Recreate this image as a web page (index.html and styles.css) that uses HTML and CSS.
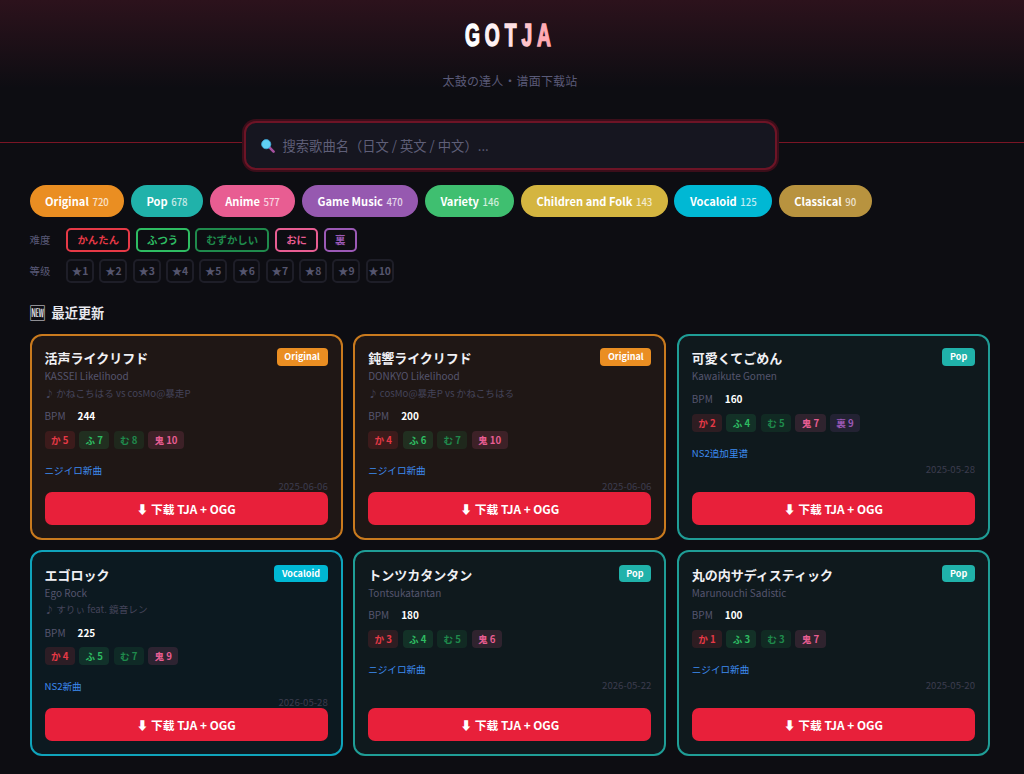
FILE: index.html
```html
<!DOCTYPE html>
<html lang="zh">
<head>
  <meta charset="UTF-8">
  <title>GOTJA</title>
  <link rel="stylesheet" href="styles.css">
</head>
<body>

  <!-- Header -->
  <header class="header">
    <h1 class="logo"><span class="l1">G</span><span class="l2">O</span><span class="l3">T</span><span class="l4">J</span><span class="l5">A</span></h1>
    <p class="tagline">太鼓の達人 · 谱面下载站</p>
  </header>

  <!-- Search -->
  <div class="search-wrap">
    <div class="search">
      <svg class="search-icon" width="14" height="14" viewBox="0 0 14 14">
        <line x1="8.2" y1="8.2" x2="12.6" y2="12.6" stroke="#a5509f" stroke-width="2.6" stroke-linecap="round"/>
        <circle cx="5.2" cy="5.2" r="4.6" fill="#5fd2f6" stroke="#3fa6d8" stroke-width="0.8"/>
      </svg>
      <span class="search-text">搜索歌曲名（日文 / 英文 / 中文）...</span>
    </div>
  </div>

  <main class="content">

    <!-- Category pills -->
    <div class="pills">
      <div class="pill bg-original">Original <span class="count">720</span></div>
      <div class="pill bg-pop">Pop <span class="count">678</span></div>
      <div class="pill bg-anime">Anime <span class="count">577</span></div>
      <div class="pill bg-game">Game Music <span class="count">470</span></div>
      <div class="pill bg-variety">Variety <span class="count">146</span></div>
      <div class="pill bg-children">Children and Folk <span class="count">143</span></div>
      <div class="pill bg-vocaloid">Vocaloid <span class="count">125</span></div>
      <div class="pill bg-classical">Classical <span class="count">90</span></div>
    </div>

    <!-- Filters -->
    <div class="filter-row">
      <span class="filter-label">难度</span>
      <div class="chip diff-kan">かんたん</div>
      <div class="chip diff-fu">ふつう</div>
      <div class="chip diff-mu">むずかしい</div>
      <div class="chip diff-oni">おに</div>
      <div class="chip diff-ura">裏</div>
    </div>
    <div class="filter-row">
      <span class="filter-label">等级</span>
      <div class="chip level">★1</div>
      <div class="chip level">★2</div>
      <div class="chip level">★3</div>
      <div class="chip level">★4</div>
      <div class="chip level">★5</div>
      <div class="chip level">★6</div>
      <div class="chip level">★7</div>
      <div class="chip level">★8</div>
      <div class="chip level">★9</div>
      <div class="chip level">★10</div>
    </div>

    <h2 class="section-title"><span class="section-icon">🆕</span> 最近更新</h2>

    <!-- Song cards -->
    <div class="grid">

      <div class="card card-original">
        <div class="card-head">
          <div class="song-title">活声ライクリフド</div>
          <span class="badge bg-original">Original</span>
        </div>
        <div class="song-sub">KASSEI Likelihood</div>
        <div class="song-artist">♪ かねこちはる vs cosMo@暴走P</div>
        <div class="bpm"><span class="bpm-label">BPM</span><b>244</b></div>
        <div class="levels">
          <span class="lv lv-kan">か 5</span>
          <span class="lv lv-fu">ふ 7</span>
          <span class="lv lv-mu">む 8</span>
          <span class="lv lv-oni">鬼 10</span>
        </div>
        <div class="note">ニジイロ新曲</div>
        <div class="date">2025-06-06</div>
        <button class="download">⬇ 下载 TJA + OGG</button>
      </div>

      <div class="card card-original">
        <div class="card-head">
          <div class="song-title">鈍響ライクリフド</div>
          <span class="badge bg-original">Original</span>
        </div>
        <div class="song-sub">DONKYO Likelihood</div>
        <div class="song-artist">♪ cosMo@暴走P vs かねこちはる</div>
        <div class="bpm"><span class="bpm-label">BPM</span><b>200</b></div>
        <div class="levels">
          <span class="lv lv-kan">か 4</span>
          <span class="lv lv-fu">ふ 6</span>
          <span class="lv lv-mu">む 7</span>
          <span class="lv lv-oni">鬼 10</span>
        </div>
        <div class="note">ニジイロ新曲</div>
        <div class="date">2025-06-06</div>
        <button class="download">⬇ 下载 TJA + OGG</button>
      </div>

      <div class="card card-pop">
        <div class="card-head">
          <div class="song-title">可愛くてごめん</div>
          <span class="badge bg-pop">Pop</span>
        </div>
        <div class="song-sub">Kawaikute Gomen</div>
        <div class="bpm"><span class="bpm-label">BPM</span><b>160</b></div>
        <div class="levels">
          <span class="lv lv-kan">か 2</span>
          <span class="lv lv-fu">ふ 4</span>
          <span class="lv lv-mu">む 5</span>
          <span class="lv lv-oni">鬼 7</span>
          <span class="lv lv-ura">裏 9</span>
        </div>
        <div class="note">NS2追加里谱</div>
        <div class="date">2025-05-28</div>
        <button class="download">⬇ 下载 TJA + OGG</button>
      </div>

      <div class="card card-vocaloid">
        <div class="card-head">
          <div class="song-title">エゴロック</div>
          <span class="badge bg-vocaloid">Vocaloid</span>
        </div>
        <div class="song-sub">Ego Rock</div>
        <div class="song-artist">♪ すりぃ feat. 鏡音レン</div>
        <div class="bpm"><span class="bpm-label">BPM</span><b>225</b></div>
        <div class="levels">
          <span class="lv lv-kan">か 4</span>
          <span class="lv lv-fu">ふ 5</span>
          <span class="lv lv-mu">む 7</span>
          <span class="lv lv-oni">鬼 9</span>
        </div>
        <div class="note">NS2新曲</div>
        <div class="date">2026-05-28</div>
        <button class="download">⬇ 下载 TJA + OGG</button>
      </div>

      <div class="card card-pop">
        <div class="card-head">
          <div class="song-title">トンツカタンタン</div>
          <span class="badge bg-pop">Pop</span>
        </div>
        <div class="song-sub">Tontsukatantan</div>
        <div class="bpm"><span class="bpm-label">BPM</span><b>180</b></div>
        <div class="levels">
          <span class="lv lv-kan">か 3</span>
          <span class="lv lv-fu">ふ 4</span>
          <span class="lv lv-mu">む 5</span>
          <span class="lv lv-oni">鬼 6</span>
        </div>
        <div class="note">ニジイロ新曲</div>
        <div class="date">2026-05-22</div>
        <button class="download">⬇ 下载 TJA + OGG</button>
      </div>

      <div class="card card-pop">
        <div class="card-head">
          <div class="song-title">丸の内サディスティック</div>
          <span class="badge bg-pop">Pop</span>
        </div>
        <div class="song-sub">Marunouchi Sadistic</div>
        <div class="bpm"><span class="bpm-label">BPM</span><b>100</b></div>
        <div class="levels">
          <span class="lv lv-kan">か 1</span>
          <span class="lv lv-fu">ふ 3</span>
          <span class="lv lv-mu">む 3</span>
          <span class="lv lv-oni">鬼 7</span>
        </div>
        <div class="note">ニジイロ新曲</div>
        <div class="date">2025-05-20</div>
        <button class="download">⬇ 下载 TJA + OGG</button>
      </div>

    </div>
  </main>
</body>
</html>
```

FILE: styles.css
```css
body {
  background-color: #0d0d12;
  color: #fff;
  font-family: "Noto Sans CJK JP", "Noto Sans", sans-serif;
  margin: 0;
}

/* header */
.header {
  box-sizing: border-box;
  height: 143px;
  padding-right: 4px;
  border-bottom: 1px solid #7a1525;
  background: linear-gradient(180deg, #2c121c 0%, #0d0d12 62%);
  text-align: center;
  overflow: hidden;
}

.logo {
  margin: 16px 0 0;
  font-family: "Liberation Sans", sans-serif;
  font-size: 31px;
  line-height: 40px;
  font-weight: 700;
  letter-spacing: 8px;
  display: inline-block;
  transform: scaleX(0.62);
  -webkit-text-stroke: 1.5px currentColor;
}

.l1 { color: #fff; }
.l2 { color: #fff2f4; }
.l3 { color: #ffe0e4; }
.l4 { color: #ffc4cb; }
.l5 { color: #ffabb4; }

.tagline {
  margin: 16px 0 0;
  font-size: 12px;
  line-height: 18px;
  letter-spacing: 0.2px;
  word-spacing: -2.5px;
  color: #5a5a78;
}

/* search */
.search-wrap {
  display: flex;
  justify-content: center;
  padding-right: 4px;
  margin-top: -22px;
  position: relative;
}

.search {
  width: 533px;
  height: 49px;
  box-sizing: border-box;
  display: flex;
  align-items: center;
  gap: 8px;
  padding-left: 15px;
  background: #161620;
  border: 2px solid #6d1426;
  border-radius: 12px;
  box-shadow: 0 0 0 2px #3c0e1a;
}

.search-text {
  font-size: 13.3px;
  color: #5f5f78;
}

.content {
  padding: 15px 34px 0 29.5px;
}

/* pills */
.pills {
  display: flex;
  gap: 6.6px;
}

.pill {
  height: 32px;
  box-sizing: border-box;
  padding: 0 15.5px;
  border-radius: 16px;
  font-size: 11.1px;
  font-weight: 700;
  line-height: 32px;
  white-space: nowrap;
}

.count {
  font-size: 9.6px;
  font-weight: 500;
  opacity: 0.75;
  margin-left: 1px;
}

.bg-original { background: #ea8e22; }
.bg-pop { background: #20b2aa; }
.bg-anime { background: #e85d92; }
.bg-game { background: #9659b0; }
.bg-variety { background: #3fbf70; }
.bg-children { background: #d4b540; }
.bg-vocaloid { background: #00b8d4; }
.bg-classical { background: #b8933f; }

/* filters */
.filter-row {
  display: flex;
  align-items: center;
  gap: 5.4px;
  margin-top: 6.7px;
}

.pills + .filter-row {
  margin-top: 10.7px;
}

.filter-label {
  width: 31.3px;
  font-size: 10.4px;
  color: #5a5a78;
}

.chip {
  height: 24.3px;
  box-sizing: border-box;
  border: 2px solid;
  border-radius: 5px;
  padding: 0 9.3px;
  font-size: 10.4px;
  font-weight: 700;
  line-height: 20px;
}

.diff-kan { color: #e63946; border-color: #e63946; }
.diff-fu { color: #2ebc62; border-color: #2ebc62; }
.diff-mu { color: #1f8a4c; border-color: #1f8a4c; }
.diff-oni { color: #e85d92; border-color: #e85d92; }
.diff-ura { color: #9b59b6; border-color: #9b59b6; }

.level {
  width: 27.9px;
  padding: 0;
  text-align: center;
  color: #55556e;
  border-color: #1e1e28;
  white-space: nowrap;
}

/* section */
.section-title {
  margin: 20px 0 12px;
  font-size: 13.2px;
  line-height: 19px;
  font-weight: 700;
  color: #e8e8ee;
  display: flex;
  align-items: center;
  gap: 6px;
}

.section-icon {
  font-size: 16px;
  font-weight: 400;
}

/* cards */
.grid {
  display: grid;
  grid-template-columns: repeat(3, 1fr);
  gap: 10.4px;
}

.card {
  box-sizing: border-box;
  border: 2px solid;
  border-radius: 12px;
  padding: 12.5px 13px 12.7px;
  display: flex;
  flex-direction: column;
}

.card-original { border-color: #c97a1e; background: #1f1715; }
.card-pop { border-color: #1f9d96; background: #0f191d; }
.card-vocaloid { border-color: #0fa3bb; background: #0c1920; }

.card-head {
  display: flex;
  justify-content: space-between;
  align-items: flex-start;
}

.song-title {
  font-size: 13px;
  font-weight: 700;
  line-height: 19px;
  color: #f0f0f4;
}

.badge {
  height: 17.5px;
  padding: 0 7.8px;
  border-radius: 4px;
  font-size: 9px;
  font-weight: 700;
  line-height: 17.5px;
}

.song-sub {
  font-size: 10px;
  line-height: 15px;
  color: #55556e;
  margin-top: 1px;
}

.song-artist {
  font-size: 9.6px;
  line-height: 15px;
  color: #44445a;
  margin-top: 2.3px;
}

.bpm {
  font-size: 10px;
  line-height: 15px;
  margin-top: 7.7px;
}

.bpm-label {
  color: #55556e;
  margin-right: 12px;
}

.levels {
  display: flex;
  gap: 4.3px;
  margin-top: 7.5px;
}

.lv {
  height: 18px;
  padding: 0 6.4px;
  border-radius: 4px;
  font-size: 9.6px;
  font-weight: 700;
  line-height: 18px;
}

.lv-kan { color: #e63946; background: #e6394626; }
.lv-fu { color: #2ebc62; background: #2ebc6226; }
.lv-mu { color: #1f8a4c; background: #1f8a4c26; }
.lv-oni { color: #e85d92; background: #e85d9226; }
.lv-ura { color: #9b59b6; background: #9b59b626; }

.note {
  font-size: 9.6px;
  line-height: 14px;
  color: #3d8bf0;
  margin-top: 14px;
}

.date {
  font-size: 9.6px;
  line-height: 12px;
  text-align: right;
  color: #3c3c4e;
  margin-top: 3px;
}

.download {
  height: 33px;
  flex-shrink: 0;
  margin-top: auto;
  border: none;
  border-radius: 7px;
  background: #e8203a;
  color: #fff;
  font-family: inherit;
  font-size: 11.8px;
  font-weight: 700;
}
```
